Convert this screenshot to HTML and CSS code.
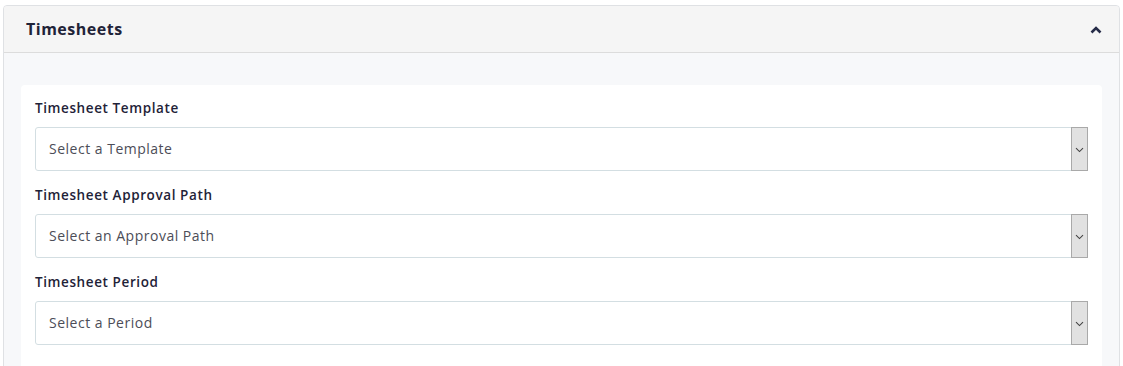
FILE: index.html
```html
<!DOCTYPE html>
<html>
<head>
<meta charset="utf-8">
<link rel="stylesheet" href="styles.css">
</head>
<body>
<section class="card">
  <header class="card-header">
    <h2 class="card-title">Timesheets</h2>
    <svg class="toggle" width="12" height="8" viewBox="0 0 12 8"><path d="M1.5 6.5 L6 2 L10.5 6.5" fill="none" stroke="#262c48" stroke-width="2.6" stroke-linejoin="miter"/></svg>
  </header>
  <div class="card-body">
    <div class="panel">
      <div class="field">
        <label class="label">Timesheet Template</label>
        <div class="select"><span class="value">Select a Template</span><span class="arrow"><svg width="9" height="6" viewBox="0 0 9 6"><path d="M1 1.2 L4.5 4.6 L8 1.2" fill="none" stroke="#444" stroke-width="1.1"/></svg></span></div>
      </div>
      <div class="field">
        <label class="label">Timesheet Approval Path</label>
        <div class="select"><span class="value">Select an Approval Path</span><span class="arrow"><svg width="9" height="6" viewBox="0 0 9 6"><path d="M1 1.2 L4.5 4.6 L8 1.2" fill="none" stroke="#444" stroke-width="1.1"/></svg></span></div>
      </div>
      <div class="field">
        <label class="label">Timesheet Period</label>
        <div class="select"><span class="value">Select a Period</span><span class="arrow"><svg width="9" height="6" viewBox="0 0 9 6"><path d="M1 1.2 L4.5 4.6 L8 1.2" fill="none" stroke="#444" stroke-width="1.1"/></svg></span></div>
      </div>
    </div>
  </div>
</section>
</body>
</html>
```

FILE: styles.css
```css
html, body {
  margin: 0;
  padding: 0;
  background: #ffffff;
  font-family: "Open Sans", "Liberation Sans", sans-serif;
  overflow: hidden;
}
.card {
  margin: 5px 0 0 3px;
  width: 1117px;
  height: 372px;
  box-sizing: border-box;
  border: 1px solid #dfe1e4;
  border-radius: 4px;
  overflow: hidden;
  background: #f7f8fa;
}
.card-header {
  height: 46px;
  background: #f5f5f5;
  border-bottom: 1px solid #dcdcdc;
  display: flex;
  align-items: center;
  justify-content: space-between;
  padding: 0 17px 0 22px;
}
.card-title {
  margin: 0;
  font-size: 16px;
  font-weight: 700;
  color: #1f2338;
  letter-spacing: 0.5px;
}
.toggle {
  display: block;
  margin-top: 1px;
}
.card-body {
  padding: 32px 17px 0 17px;
}
.panel {
  background: #ffffff;
  border-radius: 4px;
  padding: 12px 14px 40px 14px;
}
.field + .field {
  margin-top: 13px;
}
.label {
  display: block;
  font-size: 13.5px;
  font-weight: 600;
  line-height: 22px;
  color: #1f2338;
  margin-bottom: 8px;
  letter-spacing: 0.6px;
}
.select {
  height: 44px;
  box-sizing: border-box;
  border: 1px solid #d3dee2;
  border-radius: 3px;
  display: flex;
  align-items: stretch;
  justify-content: space-between;
}
.value {
  display: flex;
  align-items: center;
  padding-left: 13px;
  padding-bottom: 1px;
  font-size: 14px;
  color: #4c4d57;
  letter-spacing: 0.5px;
}
.arrow {
  width: 17px;
  box-sizing: border-box;
  background: #e1e1e1;
  border: 1px solid #a9a9a9;
  margin: -1px -1px -1px 0;
  display: flex;
  align-items: center;
  justify-content: center;
}
.arrow svg {
  display: block;
  margin-top: 2px;
}
```
